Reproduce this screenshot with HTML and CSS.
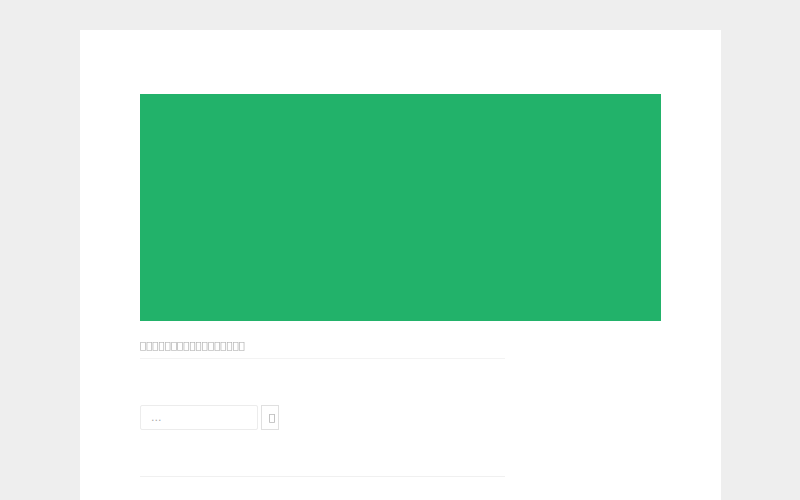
FILE: index.html
```html
<!DOCTYPE html>
<html lang="zh">
<head>
    <meta charset="UTF-8">
    <meta name="viewport" content="width=device-width, initial-scale=1.0">
    <title>Page</title>
    <link rel="stylesheet" href="styles.css">
</head>
<body>
    <div class="page">
        <main class="content">
            <figure class="banner">
                <div class="banner-image"></div>
                <figcaption class="banner-caption">&#xE000;&#xE001;&#xE002;&#xE003;&#xE004;&#xE005;&#xE006;&#xE007;&#xE008;&#xE009;&#xE00A;&#xE00B;&#xE00C;&#xE00D;&#xE00E;&#xE00F;&#xE010;</figcaption>
            </figure>
            <form class="search-form">
                <input class="search-field" type="text" placeholder="...">
                <button class="search-button" type="button">&#xE011;</button>
            </form>
            <div class="divider"></div>
        </main>
    </div>
</body>
</html>
```

FILE: styles.css
```css
* {
    margin: 0;
    padding: 0;
    box-sizing: border-box;
}

body {
    background-color: #eeeeee;
    font-family: "DejaVu Sans", sans-serif;
}

.page {
    width: 641px;
    margin: 30px 0 0 80px;
    background-color: #ffffff;
    min-height: 470px;
}

.content {
    padding: 64px 60px 0;
}

.banner-image {
    height: 227px;
    background-color: #22b26a;
}

.banner-caption {
    width: 70%;
    font-size: 10.3px;
    line-height: 14px;
    color: #a8a8a8;
    padding: 17px 0 6px;
    border-bottom: 1px solid #f3f3f3;
    will-change: transform;
}

.search-form {
    display: flex;
    gap: 3px;
    margin-top: 46px;
}

.search-field {
    width: 118px;
    height: 25px;
    border: 1px solid #ececec;
    border-radius: 2px;
    padding: 0 10px;
    font-size: 11px;
    color: #999999;
    font-family: "DejaVu Sans", sans-serif;
}

.search-field::placeholder {
    color: #aaaaaa;
}

.search-button {
    width: 18px;
    height: 25px;
    border: 1px solid #e0e0e0;
    background-color: #ffffff;
    color: #999999;
    font-size: 10px;
    white-space: nowrap;
    text-align: left;
    padding-left: 7px;
    font-family: "DejaVu Sans", sans-serif;
    will-change: transform;
}

.divider {
    width: 70%;
    margin-top: 46px;
    border-top: 1px solid #f0f0f0;
}
```
